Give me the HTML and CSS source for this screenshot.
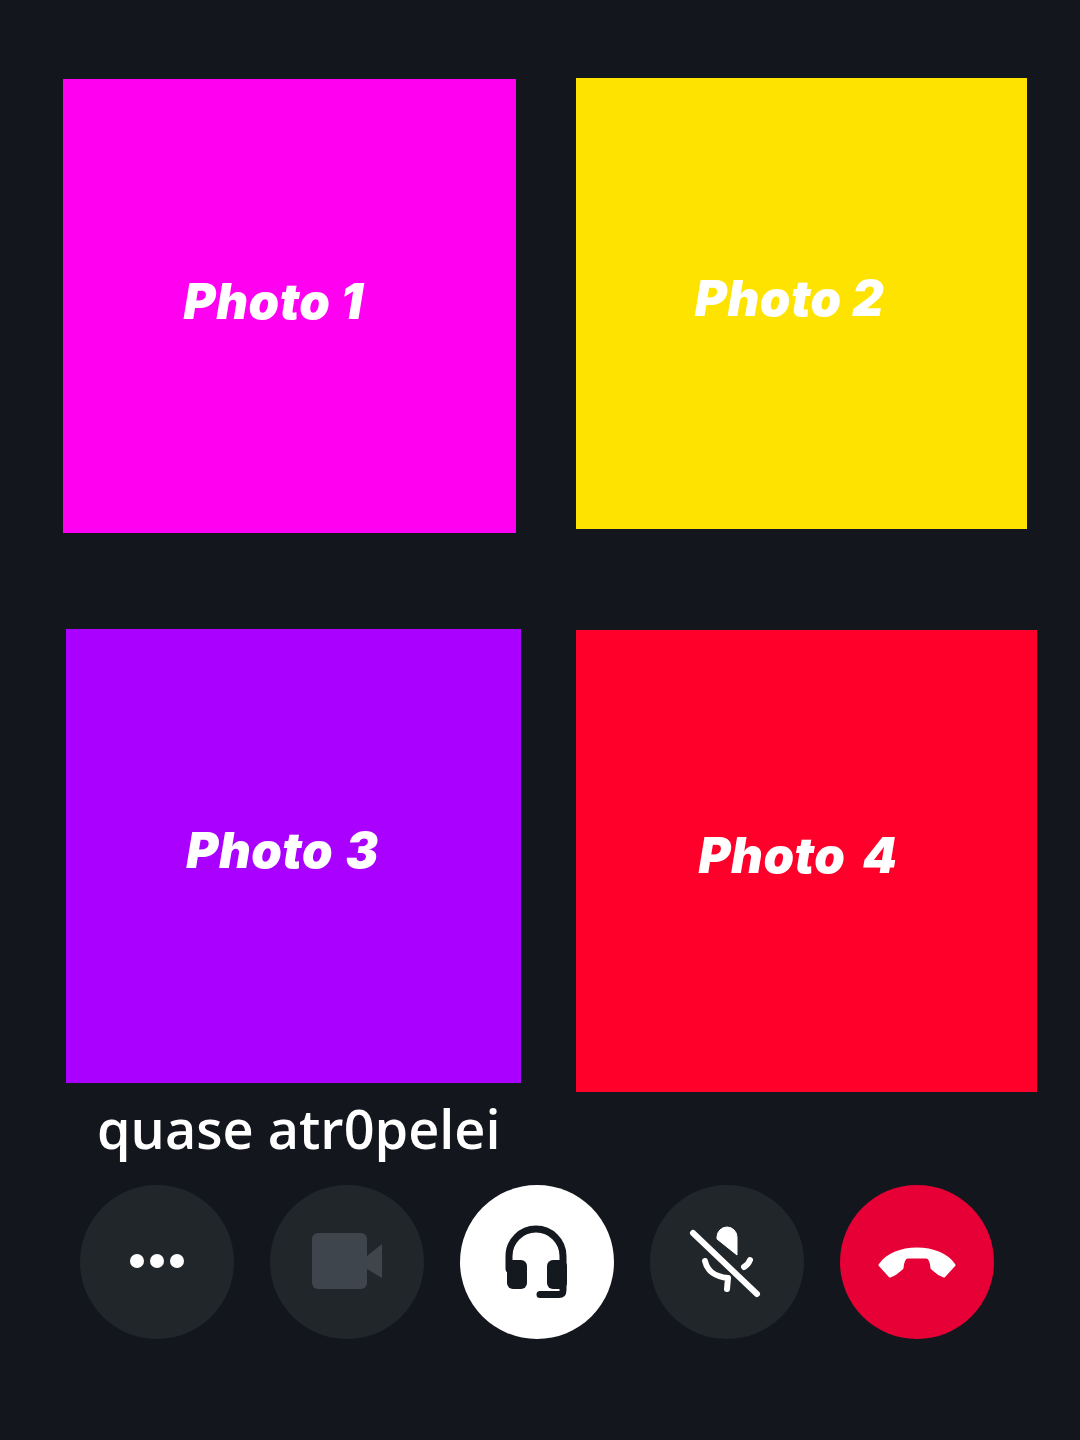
FILE: index.html
```html
<!DOCTYPE html>
<html lang="pt">
<head>
  <meta charset="UTF-8" />
  <meta name="viewport" content="width=device-width, initial-scale=1.0">
  <title>Chamada</title>
  <link rel="stylesheet" href="styles.css">
</head>
<body>

  <!-- Fotos -->
  <div class="row row-top">
    <div class="tile tile-1">Photo 1</div>
    <div class="tile tile-2">Photo 2</div>
  </div>
  <div class="row row-bottom">
    <div class="tile tile-3">Photo 3</div>
    <div class="tile tile-4">Photo 4</div>
  </div>

  <p class="caption">quase atr0pelei</p>

  <!-- Controles da chamada -->
  <div class="controls">
    <button class="ctrl">
      <svg viewBox="0 0 154 154">
        <circle cx="57" cy="76" r="7" fill="#fff" />
        <circle cx="77" cy="76" r="7" fill="#fff" />
        <circle cx="97" cy="76" r="7" fill="#fff" />
      </svg>
    </button>
    <button class="ctrl">
      <svg viewBox="0 0 154 154">
        <rect x="42" y="48" width="55" height="56" rx="6" fill="#3f454d" />
        <path d="M97 71 L112 59 V93 L97 84 Z" fill="#3f454d" />
      </svg>
    </button>
    <button class="ctrl ctrl-white">
      <svg viewBox="0 0 154 154">
        <path d="M49 84 V71 a27 27 0 0 1 54 0 V105 Q103 109.5 99 109.5 H80" fill="none" stroke="#14181f" stroke-width="7" stroke-linecap="round" />
        <rect x="47" y="75" width="20" height="29" rx="6" fill="#14181f" />
        <rect x="87" y="75" width="20" height="29" rx="6" fill="#14181f" />
      </svg>
    </button>
    <button class="ctrl">
      <svg viewBox="0 0 154 154">
        <path d="M67 54 V52 a10 10 0 0 1 20 0 V70 Z" fill="#fff" stroke="#fff" stroke-width="1" stroke-linejoin="round" />
        <path d="M43 48 L107 109" stroke="#fff" stroke-width="6" stroke-linecap="round" />
        <path d="M55 76 C57 86 66 92 78 93 M78 93 L77 104 M100 75 Q98 80 94 82" fill="none" stroke="#fff" stroke-width="6" stroke-linecap="round" />
      </svg>
    </button>
    <button class="ctrl ctrl-red">
      <svg viewBox="0 0 154 154">
        <path d="M40 80 C47 70 61 64 77 64 C93 64 107 70 114 80 L104 91 Q98 89 92 83 Q91 72 86 72 H68 Q63 72 62 83 Q56 89 50 91 Z" fill="#fff" stroke="#fff" stroke-width="3" stroke-linejoin="round" />
      </svg>
    </button>
  </div>

</body>
</html>
```

FILE: styles.css
```css
body {
  margin: 0;
  height: 1440px;
  overflow: hidden;
  background: #13171d;
  font-family: "Inter", "Liberation Sans", sans-serif;
}
.row {
  display: flex;
  align-items: flex-start;
}
.row-top {
  padding: 78px 0 0 63px;
  gap: 60px;
}
.row-bottom {
  margin-top: 96px;
  padding-left: 66px;
  gap: 55px;
}
.tile {
  display: flex;
  align-items: center;
  justify-content: center;
  box-sizing: border-box;
  color: #fff;
  font-size: 49px;
  font-weight: 900;
  font-style: italic;
  letter-spacing: 0.5px;
}
.tile-1 {
  width: 453px;
  height: 454px;
  margin-top: 1px;
  padding: 0 32px 10px 0;
  background: #ff00f0;
}
.tile-2 {
  width: 451px;
  height: 451px;
  padding: 0 24px 10px 0;
  background: #ffe300;
}
.tile-3 {
  width: 455px;
  height: 454px;
  padding: 0 22px 12px 0;
  background: #aa00ff;
  word-spacing: 2px;
}
.tile-4 {
  width: 461px;
  height: 462px;
  margin-top: 1px;
  padding: 0 17px 12px 0;
  background: #ff002b;
  word-spacing: 7px;
}
.caption {
  margin: 4px 0 0 97px;
  color: #fff;
  font-family: "Open Sans", "Liberation Sans", sans-serif;
  font-size: 54px;
  font-weight: 600;
  line-height: 64px;
}
.controls {
  display: flex;
  gap: 36px;
  margin: 25px 0 0 80px;
}
.ctrl {
  width: 154px;
  height: 154px;
  padding: 0;
  border: none;
  border-radius: 50%;
  background: #21262a;
}
.ctrl svg {
  display: block;
  width: 154px;
  height: 154px;
}
.ctrl-white {
  background: #fff;
}
.ctrl-red {
  background: #e60035;
}
```
